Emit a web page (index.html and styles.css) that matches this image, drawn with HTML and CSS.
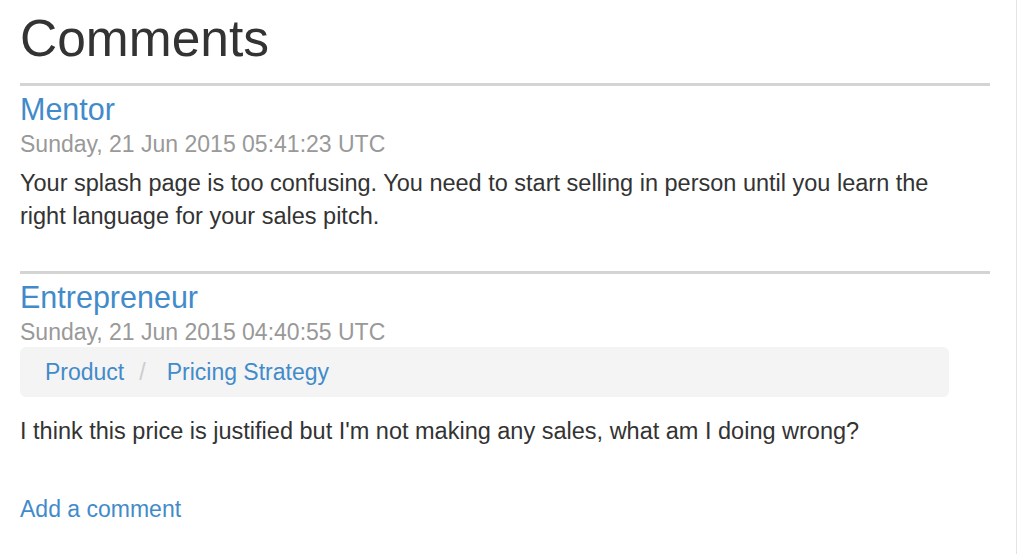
FILE: index.html
```html
<!DOCTYPE html>
<html>
<head>
<meta charset="utf-8">
<link rel="stylesheet" href="styles.css">
</head>
<body>
<div class="page">
  <div class="container">
    <h1 class="title">Comments</h1>
    <div class="comment">
      <a class="author" href="#">Mentor</a>
      <div class="date">Sunday, 21 Jun 2015 05:41:23 UTC</div>
      <p class="text">Your splash page is too confusing. You need to start selling in person until you learn the right language for your sales pitch.</p>
    </div>
    <div class="comment">
      <a class="author" href="#">Entrepreneur</a>
      <div class="date">Sunday, 21 Jun 2015 04:40:55 UTC</div>
      <ol class="crumbs">
        <li><a href="#">Product</a></li>
        <li class="sep">/</li>
        <li><a href="#">Pricing Strategy</a></li>
      </ol>
      <p class="text">I think this price is justified but I'm not making any sales, what am I doing wrong?</p>
    </div>
    <a class="add" href="#">Add a comment</a>
  </div>
</div>
</body>
</html>
```
FILE: styles.css
```css
html, body {
  margin: 0;
  padding: 0;
  height: 100%;
  background: #fff;
}
body {
  font-family: "Liberation Sans", Arial, sans-serif;
  color: #333;
}
.page {
  width: 1017px;
  min-height: 100%;
  box-sizing: border-box;
  border-right: 1px solid #e3e3e3;
}
.container {
  width: 970px;
  padding: 0 0 0 20px;
}
a {
  color: #428bca;
  text-decoration: none;
}
.title {
  margin: 0;
  padding-top: 8px;
  font-size: 51.5px;
  font-weight: normal;
  line-height: 60px;
  height: 75px;
}
.comment {
  border-top: 3px solid #d4d4d4;
  padding-top: 5px;
  margin-bottom: 38px;
}
.author {
  display: block;
  font-size: 30.5px;
  line-height: 36px;
}
.date {
  font-size: 23px;
  line-height: 34px;
  color: #999;
}
.text {
  margin: 6px 0 0;
  max-width: 945px;
  font-size: 23.5px;
  line-height: 33px;
}
.crumbs {
  list-style: none;
  margin: -2px 0 18px;
  padding: 0 25px;
  width: 929px;
  box-sizing: border-box;
  height: 50px;
  display: flex;
  align-items: center;
  background: #f4f4f4;
  border-radius: 6px;
  font-size: 23px;
}
.crumbs .sep {
  color: #ccc;
  margin: 0 21px 0 15px;
}
.add {
  display: inline-block;
  font-size: 23px;
  margin-top: 10px;
}
```
